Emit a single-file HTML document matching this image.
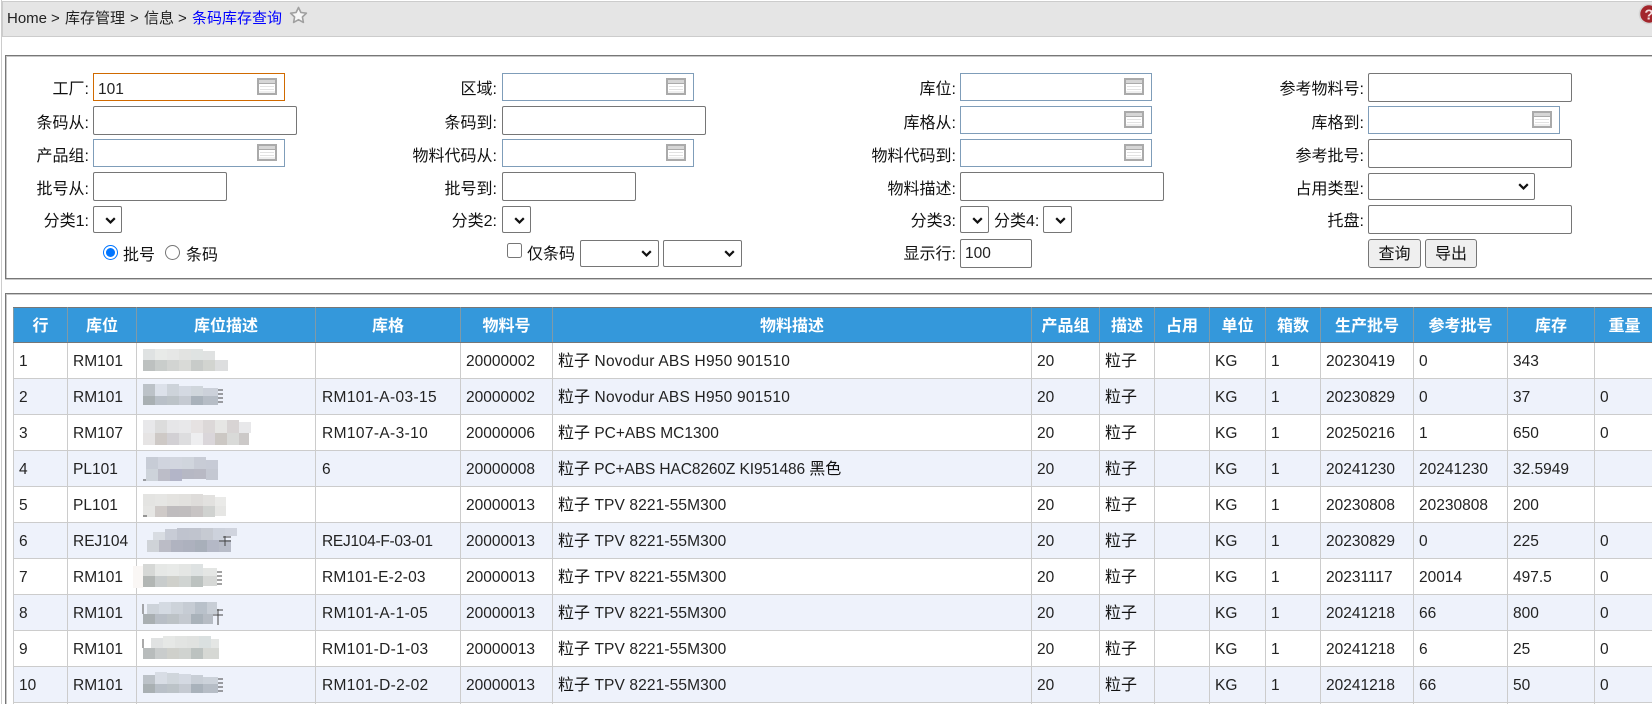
<!DOCTYPE html>
<html lang="zh">
<head>
<meta charset="utf-8">
<title>条码库存查询</title>
<style>
html,body{margin:0;padding:0;width:1652px;height:704px;overflow:hidden;background:#fff}
body{position:relative;font-family:"Liberation Sans","Noto Sans CJK SC",sans-serif;font-size:16px;color:#111}
.a{position:absolute}
.bar{position:absolute;left:2px;top:1px;width:1650px;height:34px;background:#e5e5e5;border-top:1px solid #ccc;border-bottom:1px solid #ccc;border-left:1px solid #ccc}
.crumb{position:absolute;top:9px;line-height:20px;font-size:15px;color:#222;white-space:nowrap}
.panel{position:absolute;left:5px;width:1660px;border:1px solid #777;box-shadow:inset 1px 1px 0 #c8c8c8,0 1px 0 #c8c8c8;box-sizing:border-box}
.l{position:absolute;line-height:20px;height:20px;white-space:nowrap;font-size:16px}
input[type=text],.box{position:absolute;box-sizing:border-box;margin:0;background:#fff;border:1px solid #767676;border-radius:2px;padding:0 4px;font:15.5px "Liberation Sans",sans-serif;color:#222;outline:0}
.lk{position:absolute;box-sizing:border-box;width:192px;height:28px;border:1px solid #7f9db9;background:#fff;border-radius:0}
.lk svg{position:absolute;right:7px;top:4px}
select{position:absolute;box-sizing:border-box;margin:0;height:27px;background:#fff;border:1px solid #767676;border-radius:2px;font:15px "Liberation Sans",sans-serif;appearance:none;-webkit-appearance:none}
.chev{position:absolute;pointer-events:none}
.btn{position:absolute;box-sizing:border-box;top:239px;height:29px;background:#efefef;border:1px solid #767676;border-radius:3px;text-align:center;line-height:30px;font-size:16px;color:#111}
table{position:absolute;left:13px;top:307px;width:1641px;table-layout:fixed;border-collapse:collapse;font-size:15.5px;color:#222}
th{height:31px;padding:3px 0 0;background:#3498db;color:#fff;font-size:16px;font-weight:bold;border:1px solid #7f9aa8;border-top-color:#777;border-bottom-color:#777;line-height:20px;white-space:nowrap}
td{height:32px;padding:3px 5px 0;border:1px solid #ccc;line-height:20px;white-space:nowrap;overflow:hidden}
tr.e td{background:#eef2fb}
td.g{padding-left:6px}
.c{font-size:16px;color:#111;letter-spacing:0}
</style>
</head>
<body>
<svg width="0" height="0" style="position:absolute"><defs>
<g id="ic"><rect x="1" y="1" width="18" height="15" fill="#fff" stroke="#aaa" stroke-width="2"/><rect x="2" y="2" width="16" height="3" fill="#d6d6d6"/><rect x="2" y="5" width="16" height="1" fill="#aaa"/><path d="M3 8.5h14M3 11.5h14" stroke="#e2e2e2"/><rect x="2" y="13" width="16" height="2" fill="#efefef"/></g>
<path id="cv" d="M1.2 1.2L5.5 5.4L9.8 1.2" fill="none" stroke="#111" stroke-width="2.2"/>
</defs></svg>
<div class="a" style="left:1px;top:0;width:1px;height:704px;background:#ccc"></div>
<div class="bar"></div>
<div class="crumb" style="left:7px">Home</div>
<div class="crumb" style="left:51px">&gt;</div>
<div class="crumb" style="left:65px">库存管理</div>
<div class="crumb" style="left:130px">&gt;</div>
<div class="crumb" style="left:144px">信息</div>
<div class="crumb" style="left:178px">&gt;</div>
<div class="crumb" style="left:192px;color:#0000ff">条码库存查询</div>
<svg class="a" style="left:289px;top:6px" width="19" height="18" viewBox="0 0 19 18"><path d="M9.5 1.5l2.4 5 5.5.7-4 3.8 1 5.4-4.9-2.7-4.9 2.7 1-5.4-4-3.8 5.5-.7z" fill="#f7f7f7" stroke="#a0a0a0" stroke-width="1.6" stroke-linejoin="round"/></svg>
<svg class="a" style="left:1638px;top:3px" width="22" height="22" viewBox="0 0 22 22"><circle cx="11" cy="11" r="9.5" fill="#a3262c" stroke="#d4d4d4" stroke-width="1.6"/><text x="11" y="16.5" text-anchor="middle" font-family="Liberation Sans" font-weight="bold" font-size="15" fill="#f4dede">?</text></svg>

<div class="panel" style="top:55px;height:224px"></div>
<div class="panel" style="top:293px;height:430px"></div>

<!-- col 1 -->
<div class="l" style="right:1563px;top:80px">工厂:</div>
<div class="l" style="right:1563px;top:114px">条码从:</div>
<div class="l" style="right:1563px;top:147px">产品组:</div>
<div class="l" style="right:1563px;top:180px">批号从:</div>
<div class="l" style="right:1563px;top:212px">分类1:</div>
<div class="lk" style="left:93px;top:73px;border-color:#d06a00"><svg width="20" height="17"><use href="#ic"/></svg></div>
<div class="a" style="left:98px;top:80px;font-size:15.5px;line-height:20px;color:#222">101</div>
<input type="text" style="left:93px;top:106px;width:204px;height:29px">
<div class="lk" style="left:93px;top:139px"><svg width="20" height="17"><use href="#ic"/></svg></div>
<input type="text" style="left:93px;top:172px;width:134px;height:29px">
<select style="left:93px;top:206px;width:29px"><option></option></select>
<svg class="chev" style="left:105px;top:217px" width="11" height="7"><use href="#cv"/></svg>
<input class="a" type="radio" name="r" checked style="left:103px;top:245px;width:15px;height:15px;margin:0">
<div class="l" style="left:123px;top:246px">批号</div>
<input class="a" type="radio" name="r" style="left:165px;top:245px;width:15px;height:15px;margin:0">
<div class="l" style="left:186px;top:246px">条码</div>

<!-- col 2 -->
<div class="l" style="right:1155px;top:80px">区域:</div>
<div class="l" style="right:1155px;top:114px">条码到:</div>
<div class="l" style="right:1155px;top:147px">物料代码从:</div>
<div class="l" style="right:1155px;top:180px">批号到:</div>
<div class="l" style="right:1155px;top:212px">分类2:</div>
<div class="lk" style="left:502px;top:73px"><svg width="20" height="17"><use href="#ic"/></svg></div>
<input type="text" style="left:502px;top:106px;width:204px;height:29px">
<div class="lk" style="left:502px;top:139px"><svg width="20" height="17"><use href="#ic"/></svg></div>
<input type="text" style="left:502px;top:172px;width:134px;height:29px">
<select style="left:502px;top:206px;width:29px"><option></option></select>
<svg class="chev" style="left:514px;top:217px" width="11" height="7"><use href="#cv"/></svg>
<input class="a" type="checkbox" style="left:507px;top:243px;width:15px;height:15px;margin:0">
<div class="l" style="left:527px;top:245px">仅条码</div>
<select style="left:580px;top:240px;width:79px"><option></option></select>
<svg class="chev" style="left:641px;top:250px" width="11" height="7"><use href="#cv"/></svg>
<select style="left:663px;top:240px;width:79px"><option></option></select>
<svg class="chev" style="left:724px;top:250px" width="11" height="7"><use href="#cv"/></svg>

<!-- col 3 -->
<div class="l" style="right:696px;top:80px">库位:</div>
<div class="l" style="right:696px;top:114px">库格从:</div>
<div class="l" style="right:696px;top:147px">物料代码到:</div>
<div class="l" style="right:696px;top:180px">物料描述:</div>
<div class="l" style="right:696px;top:212px">分类3:</div>
<div class="l" style="left:994px;top:212px">分类4:</div>
<div class="l" style="right:696px;top:245px">显示行:</div>
<div class="lk" style="left:960px;top:73px"><svg width="20" height="17"><use href="#ic"/></svg></div>
<div class="lk" style="left:960px;top:106px"><svg width="20" height="17"><use href="#ic"/></svg></div>
<div class="lk" style="left:960px;top:139px"><svg width="20" height="17"><use href="#ic"/></svg></div>
<input type="text" style="left:960px;top:172px;width:204px;height:29px">
<select style="left:960px;top:206px;width:29px"><option></option></select>
<svg class="chev" style="left:972px;top:217px" width="11" height="7"><use href="#cv"/></svg>
<select style="left:1043px;top:206px;width:29px"><option></option></select>
<svg class="chev" style="left:1055px;top:217px" width="11" height="7"><use href="#cv"/></svg>
<input type="text" value="100" style="left:960px;top:239px;width:72px;height:29px;padding:1px 0 0 4px">

<!-- col 4 -->
<div class="l" style="right:288px;top:80px">参考物料号:</div>
<div class="l" style="right:288px;top:114px">库格到:</div>
<div class="l" style="right:288px;top:147px">参考批号:</div>
<div class="l" style="right:288px;top:180px">占用类型:</div>
<div class="l" style="right:288px;top:212px">托盘:</div>
<input type="text" style="left:1368px;top:73px;width:204px;height:29px">
<div class="lk" style="left:1368px;top:106px"><svg width="20" height="17"><use href="#ic"/></svg></div>
<input type="text" style="left:1368px;top:139px;width:204px;height:29px">
<select style="left:1368px;top:173px;width:167px"><option></option></select>
<svg class="chev" style="left:1518px;top:183px" width="11" height="7"><use href="#cv"/></svg>
<input type="text" style="left:1368px;top:205px;width:204px;height:29px">
<div class="btn" style="left:1368px;width:53px">查询</div>
<div class="btn" style="left:1425px;width:52px">导出</div>

<table>
<colgroup><col style="width:54px"><col style="width:69px"><col style="width:179px"><col style="width:145px"><col style="width:92px"><col style="width:479px"><col style="width:68px"><col style="width:55px"><col style="width:55px"><col style="width:56px"><col style="width:55px"><col style="width:93px"><col style="width:94px"><col style="width:87px"><col style="width:60px"></colgroup>
<tr><th>行</th><th>库位</th><th>库位描述</th><th>库格</th><th>物料号</th><th>物料描述</th><th>产品组</th><th>描述</th><th>占用</th><th>单位</th><th>箱数</th><th>生产批号</th><th>参考批号</th><th>库存</th><th>重量</th></tr>
<tr><td>1</td><td>RM101</td><td></td><td></td><td>20000002</td><td style="letter-spacing:.22px"><span class="c">粒子</span> Novodur ABS H950 901510</td><td>20</td><td><span class="c">粒子</span></td><td></td><td>KG</td><td>1</td><td>20230419</td><td>0</td><td>343</td><td></td></tr>
<tr class="e"><td>2</td><td>RM101</td><td></td><td class="g" style="letter-spacing:.36px">RM101-A-03-15</td><td>20000002</td><td style="letter-spacing:.22px"><span class="c">粒子</span> Novodur ABS H950 901510</td><td>20</td><td><span class="c">粒子</span></td><td></td><td>KG</td><td>1</td><td>20230829</td><td>0</td><td>37</td><td>0</td></tr>
<tr><td>3</td><td>RM107</td><td></td><td class="g" style="letter-spacing:.37px">RM107-A-3-10</td><td>20000006</td><td><span class="c">粒子</span> PC+ABS MC1300</td><td>20</td><td><span class="c">粒子</span></td><td></td><td>KG</td><td>1</td><td>20250216</td><td>1</td><td>650</td><td>0</td></tr>
<tr class="e"><td>4</td><td>PL101</td><td></td><td class="g">6</td><td>20000008</td><td style="letter-spacing:-.1px"><span class="c">粒子</span> PC+ABS HAC8260Z KI951486 <span class="c">黑色</span></td><td>20</td><td><span class="c">粒子</span></td><td></td><td>KG</td><td>1</td><td>20241230</td><td>20241230</td><td>32.5949</td><td></td></tr>
<tr><td>5</td><td>PL101</td><td></td><td></td><td>20000013</td><td style="letter-spacing:.12px"><span class="c">粒子</span> TPV 8221-55M300</td><td>20</td><td><span class="c">粒子</span></td><td></td><td>KG</td><td>1</td><td>20230808</td><td>20230808</td><td>200</td><td></td></tr>
<tr class="e"><td>6</td><td>REJ104</td><td></td><td class="g" style="letter-spacing:-.28px">REJ104-F-03-01</td><td>20000013</td><td style="letter-spacing:.12px"><span class="c">粒子</span> TPV 8221-55M300</td><td>20</td><td><span class="c">粒子</span></td><td></td><td>KG</td><td>1</td><td>20230829</td><td>0</td><td>225</td><td>0</td></tr>
<tr><td>7</td><td>RM101</td><td></td><td class="g" style="letter-spacing:.17px">RM101-E-2-03</td><td>20000013</td><td style="letter-spacing:.12px"><span class="c">粒子</span> TPV 8221-55M300</td><td>20</td><td><span class="c">粒子</span></td><td></td><td>KG</td><td>1</td><td>20231117</td><td>20014</td><td>497.5</td><td>0</td></tr>
<tr class="e"><td>8</td><td>RM101</td><td></td><td class="g" style="letter-spacing:.37px">RM101-A-1-05</td><td>20000013</td><td style="letter-spacing:.12px"><span class="c">粒子</span> TPV 8221-55M300</td><td>20</td><td><span class="c">粒子</span></td><td></td><td>KG</td><td>1</td><td>20241218</td><td>66</td><td>800</td><td>0</td></tr>
<tr><td>9</td><td>RM101</td><td></td><td class="g" style="letter-spacing:.33px">RM101-D-1-03</td><td>20000013</td><td style="letter-spacing:.12px"><span class="c">粒子</span> TPV 8221-55M300</td><td>20</td><td><span class="c">粒子</span></td><td></td><td>KG</td><td>1</td><td>20241218</td><td>6</td><td>25</td><td>0</td></tr>
<tr class="e"><td>10</td><td>RM101</td><td></td><td class="g" style="letter-spacing:.33px">RM101-D-2-02</td><td>20000013</td><td style="letter-spacing:.12px"><span class="c">粒子</span> TPV 8221-55M300</td><td>20</td><td><span class="c">粒子</span></td><td></td><td>KG</td><td>1</td><td>20241218</td><td>66</td><td>50</td><td>0</td></tr>
<tr><td>&nbsp;</td><td></td><td></td><td></td><td></td><td></td><td></td><td></td><td></td><td></td><td></td><td></td><td></td><td></td><td></td></tr>
</table>

<svg class="a" style="left:0;top:0" width="1652" height="704" shape-rendering="crispEdges">
<!-- row 1 -->
<g transform="translate(143,349)"><g>
<rect x="0" y="0" width="12" height="11" fill="#dfe2e2"/><rect x="12" y="0" width="12" height="11" fill="#e8eae8"/><rect x="24" y="0" width="12" height="11" fill="#e6e7e6"/><rect x="36" y="0" width="12" height="11" fill="#e2e3e1"/><rect x="48" y="0" width="12" height="11" fill="#dfe3e2"/><rect x="60" y="2" width="12" height="9" fill="#e0e2e2"/>
<rect x="0" y="11" width="12" height="11" fill="#bdc1c0"/><rect x="12" y="11" width="12" height="11" fill="#c9cdcb"/><rect x="24" y="11" width="12" height="11" fill="#d2d4d2"/><rect x="36" y="11" width="12" height="11" fill="#d9dad7"/><rect x="48" y="11" width="12" height="11" fill="#c8cbc9"/><rect x="60" y="11" width="12" height="11" fill="#d2d4d0"/><rect x="72" y="11" width="13" height="11" fill="#dddedf"/></g></g>
<!-- row 2 -->
<g transform="translate(143,384)">
<rect x="0" y="0" width="12" height="12" fill="#bcc2c8"/><rect x="12" y="0" width="12" height="12" fill="#dce1ea"/><rect x="24" y="0" width="12" height="12" fill="#cdd3da"/><rect x="36" y="2" width="12" height="10" fill="#d4d9e2"/><rect x="48" y="2" width="12" height="10" fill="#d0d6dc"/><rect x="60" y="4" width="15" height="8" fill="#ccd1da"/>
<rect x="0" y="12" width="12" height="9" fill="#a9b0b3"/><rect x="12" y="12" width="12" height="9" fill="#b9c0c8"/><rect x="24" y="12" width="12" height="9" fill="#bcc3c8"/><rect x="36" y="12" width="12" height="9" fill="#c5cad2"/><rect x="48" y="12" width="12" height="9" fill="#a9b2bb"/><rect x="60" y="12" width="15" height="9" fill="#b6bdc6"/>
<path d="M75 6h5M75 10h5M75 14h5M75 18h5" stroke="#444"/></g>
<!-- row 3 -->
<g transform="translate(143,420)">
<rect x="0" y="0" width="12" height="13" fill="#e8e8ea"/><rect x="12" y="0" width="12" height="13" fill="#dcdcdc"/><rect x="24" y="0" width="12" height="13" fill="#e6e6e8"/><rect x="36" y="0" width="12" height="13" fill="#e8e8ea"/><rect x="48" y="0" width="12" height="13" fill="#e6e2e2"/><rect x="60" y="0" width="12" height="13" fill="#dcd8d8"/><rect x="72" y="0" width="12" height="13" fill="#e6e6e4"/><rect x="84" y="0" width="12" height="13" fill="#d8d4d4"/><rect x="96" y="2" width="12" height="11" fill="#e8e8ea"/>
<rect x="0" y="13" width="12" height="12" fill="#e6e4e4"/><rect x="12" y="13" width="12" height="12" fill="#cec9c6"/><rect x="24" y="13" width="12" height="12" fill="#d2d0d4"/><rect x="36" y="13" width="12" height="12" fill="#dddddf"/><rect x="48" y="13" width="12" height="12" fill="#eeeef0"/><rect x="60" y="13" width="12" height="12" fill="#dad6da"/><rect x="72" y="13" width="12" height="12" fill="#ccc8c4"/><rect x="84" y="13" width="12" height="12" fill="#d9dad8"/><rect x="96" y="13" width="10" height="12" fill="#ccc9c8"/></g>
<!-- row 4 -->
<g transform="translate(146,457)">
<rect x="0" y="0" width="12" height="12" fill="#c7ccd6"/><rect x="12" y="0" width="12" height="12" fill="#d0d4de"/><rect x="24" y="0" width="12" height="12" fill="#d2d6df"/><rect x="36" y="0" width="12" height="12" fill="#d0d5dd"/><rect x="48" y="0" width="12" height="12" fill="#c8ccd6"/><rect x="60" y="3" width="12" height="9" fill="#c7cbd6"/>
<rect x="0" y="12" width="12" height="12" fill="#cdd3da"/><rect x="12" y="12" width="12" height="12" fill="#bcbdc8"/><rect x="24" y="12" width="12" height="12" fill="#b3b5c8"/><rect x="36" y="12" width="12" height="10" fill="#b6b8c4"/><rect x="48" y="12" width="12" height="10" fill="#b8b9c4"/><rect x="60" y="12" width="12" height="11" fill="#c4c8d2"/>
<path d="M-3 23h3" stroke="#444"/></g>
<!-- row 5 -->
<g transform="translate(143,494)">
<rect x="0" y="0" width="12" height="12" fill="#e4e4e2"/><rect x="12" y="0" width="12" height="12" fill="#e6e6e4"/><rect x="24" y="0" width="12" height="12" fill="#e4e3e0"/><rect x="36" y="0" width="12" height="12" fill="#e2e1de"/><rect x="48" y="0" width="12" height="12" fill="#dedcda"/><rect x="60" y="1" width="12" height="11" fill="#e2e1df"/><rect x="72" y="3" width="11" height="9" fill="#eaeae8"/>
<rect x="0" y="12" width="12" height="11" fill="#e6e6e4"/><rect x="12" y="12" width="12" height="11" fill="#cfcac8"/><rect x="24" y="12" width="12" height="11" fill="#bfbcbe"/><rect x="36" y="12" width="12" height="11" fill="#c0bdbe"/><rect x="48" y="12" width="12" height="11" fill="#c8c4c4"/><rect x="60" y="12" width="12" height="11" fill="#d0d2d0"/><rect x="72" y="12" width="11" height="10" fill="#e6e6e4"/>
<path d="M0 22h4" stroke="#444"/></g>
<!-- row 6 -->
<g transform="translate(147,528)">
<rect x="6" y="4" width="12" height="8" fill="#d8dce2"/><rect x="18" y="1" width="12" height="11" fill="#c8ccd6"/><rect x="30" y="0" width="12" height="12" fill="#bfc3ce"/><rect x="42" y="0" width="12" height="12" fill="#c0c4ce"/><rect x="54" y="0" width="12" height="12" fill="#c6cad2"/><rect x="66" y="0" width="12" height="12" fill="#cdd2dc"/><rect x="78" y="0" width="12" height="8" fill="#d0d4de"/>
<rect x="0" y="12" width="12" height="12" fill="#cfd3d8"/><rect x="12" y="12" width="12" height="12" fill="#bbbcc6"/><rect x="24" y="12" width="12" height="12" fill="#b0b3c0"/><rect x="36" y="12" width="12" height="12" fill="#adb1be"/><rect x="48" y="12" width="12" height="12" fill="#a8afba"/><rect x="60" y="12" width="12" height="12" fill="#b4b8c6"/><rect x="72" y="12" width="12" height="12" fill="#b8bcc8"/>
<path d="M72 13h12M78 8v10M76 9h8" stroke="#444"/></g>
<!-- row 7 -->
<g transform="translate(143,564)">
<rect x="-10" y="2" width="10" height="22" fill="#faf7f5"/>
<rect x="0" y="0" width="12" height="12" fill="#d6d8d6"/><rect x="12" y="0" width="12" height="12" fill="#e6e8e6"/><rect x="24" y="0" width="12" height="12" fill="#e8eae8"/><rect x="36" y="0" width="12" height="12" fill="#e4e6e4"/><rect x="48" y="0" width="12" height="12" fill="#dee2e2"/><rect x="60" y="4" width="14" height="8" fill="#e4e6e4"/>
<rect x="0" y="12" width="12" height="11" fill="#b2b6b4"/><rect x="12" y="12" width="12" height="11" fill="#c8cccc"/><rect x="24" y="12" width="12" height="11" fill="#cfd0cb"/><rect x="36" y="12" width="12" height="11" fill="#d0d4d2"/><rect x="48" y="12" width="12" height="11" fill="#bcc2c0"/><rect x="60" y="12" width="14" height="10" fill="#d6d8d6"/>
<path d="M74 8h5M74 12h5M74 16h5M74 20h5" stroke="#444"/></g>
<!-- row 8 -->
<g transform="translate(143,602)">
<rect x="4" y="2" width="12" height="10" fill="#cdd3da"/><rect x="16" y="0" width="12" height="12" fill="#d4dae2"/><rect x="28" y="0" width="12" height="12" fill="#cdd3da"/><rect x="40" y="0" width="12" height="12" fill="#c6ccd4"/><rect x="52" y="0" width="12" height="12" fill="#b9c1ca"/><rect x="64" y="0" width="10" height="12" fill="#c8ced6"/>
<rect x="0" y="12" width="12" height="10" fill="#a9afb2"/><rect x="12" y="12" width="12" height="10" fill="#b8bec6"/><rect x="24" y="12" width="12" height="10" fill="#bcc2c6"/><rect x="36" y="12" width="12" height="10" fill="#c4c9d0"/><rect x="48" y="12" width="12" height="10" fill="#a9b2ba"/><rect x="60" y="12" width="10" height="10" fill="#b6bcc4"/>
<path d="M70 13h10M75 7v16M74 8h6" stroke="#444"/><path d="M0 2v10" stroke="#555"/></g>
<!-- row 9 -->
<g transform="translate(143,636)">
<rect x="8" y="2" width="12" height="10" fill="#e0e2e2"/><rect x="20" y="0" width="12" height="12" fill="#e6e8e6"/><rect x="32" y="0" width="12" height="12" fill="#e2e4e2"/><rect x="44" y="0" width="12" height="12" fill="#e0e2e0"/><rect x="56" y="0" width="12" height="12" fill="#dae0e0"/><rect x="68" y="3" width="8" height="9" fill="#e4e6e4"/>
<rect x="0" y="12" width="12" height="11" fill="#b8bcbc"/><rect x="12" y="12" width="12" height="11" fill="#c9cccc"/><rect x="24" y="12" width="12" height="11" fill="#cfd0cb"/><rect x="36" y="12" width="12" height="11" fill="#d0d3d0"/><rect x="48" y="12" width="12" height="11" fill="#bcc2c0"/><rect x="60" y="12" width="16" height="11" fill="#d6d8d4"/>
<path d="M0 3v9" stroke="#555"/></g>
<!-- row 10 -->
<g transform="translate(143,672)">
<rect x="0" y="3" width="12" height="9" fill="#bcc2c8"/><rect x="12" y="0" width="12" height="12" fill="#d8dde5"/><rect x="24" y="1" width="12" height="11" fill="#d0d6dc"/><rect x="36" y="2" width="12" height="10" fill="#d4d9e2"/><rect x="48" y="3" width="12" height="9" fill="#c8ced6"/><rect x="60" y="5" width="15" height="7" fill="#ccd2da"/>
<rect x="0" y="12" width="12" height="9" fill="#a9b0b3"/><rect x="12" y="12" width="12" height="9" fill="#b9c0c8"/><rect x="24" y="12" width="12" height="9" fill="#bcc3c8"/><rect x="36" y="12" width="12" height="9" fill="#c5cad2"/><rect x="48" y="12" width="12" height="9" fill="#a9b2bb"/><rect x="60" y="12" width="15" height="9" fill="#b6bdc6"/>
<path d="M75 7h5M75 11h5M75 15h5M75 19h5" stroke="#444"/></g>
</svg>
</body>
</html>
